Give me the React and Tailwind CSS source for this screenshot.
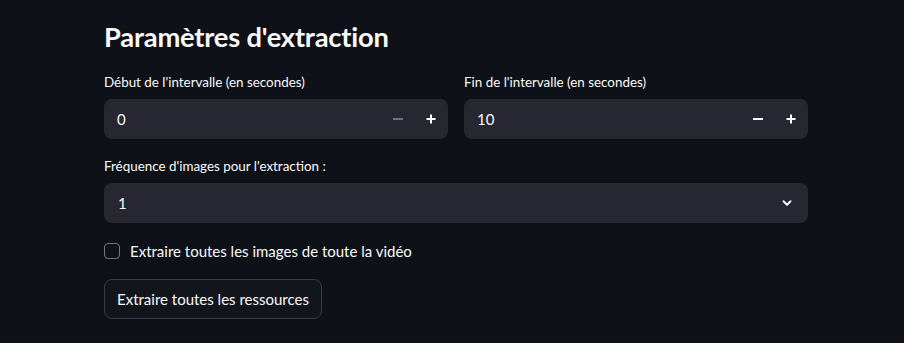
import React, { useState } from "react";

const font = { fontFamily: "Lato, 'Noto Sans', sans-serif" };

function NumberInput({ value, minDisabled }) {
  return (
    <div className="flex h-10 items-center rounded-lg bg-[#262730] pl-[13px] pr-[1px]">
      <span className="flex-1 text-[15px] text-[#fafafa]">{value}</span>
      <button className={`flex h-8 w-[33px] items-center justify-center ${minDisabled ? "text-[#6f707a]" : "text-white"}`}>
        <svg width="12" height="12" viewBox="0 0 12 12">
          <rect x="1" y="5" width="10" height="2" fill="currentColor" />
        </svg>
      </button>
      <button className="flex h-8 w-[33px] items-center justify-center text-white">
        <svg width="12" height="12" viewBox="0 0 12 12">
          <rect x="1.5" y="5" width="9" height="2" fill="currentColor" />
          <rect x="5" y="1.5" width="2" height="9" fill="currentColor" />
        </svg>
      </button>
    </div>
  );
}

export default function App() {
  const [checked, setChecked] = useState(false);
  return (
    <div className="min-h-[343px] w-full bg-[#0e1117] text-[#fafafa]" style={font}>
      <div className="ml-[104px] w-[704px] pt-[19px]">
        <h3 className="text-[27.3px] font-bold leading-[36px] tracking-[-0.2px]">Paramètres d'extraction</h3>
        <div className="mt-[18px] grid grid-cols-2 gap-4">
          <div>
            <label className="mb-[7px] block text-[13.4px] leading-[19px]">Début de l'intervalle (en secondes)</label>
            <NumberInput value="0" minDisabled />
          </div>
          <div>
            <label className="mb-[7px] block text-[13.4px] leading-[19px]">Fin de l'intervalle (en secondes)</label>
            <NumberInput value="10" />
          </div>
        </div>
        <div className="mt-[18px]">
          <label className="mb-[7px] block text-[13.4px] leading-[19px]">Fréquence d'images pour l'extraction :</label>
          <div className="flex h-10 items-center rounded-lg bg-[#262730] pl-[14px] pr-[14px]">
            <span className="flex-1 text-[15px]">1</span>
            <svg width="14" height="14" viewBox="0 0 24 24" fill="none" stroke="white" strokeWidth="3.2" strokeLinecap="round" strokeLinejoin="round">
              <path d="M6 9l6 6 6-6" />
            </svg>
          </div>
        </div>
        <label className="mt-[17px] flex items-center gap-[10px] cursor-pointer" onClick={() => setChecked(!checked)}>
          <span className="h-4 w-4 rounded-[4px] border border-[#74767f] bg-[#0e1117]" />
          <span className="text-[15px] leading-[22px]">Extraire toutes les images de toute la vidéo</span>
        </label>
        <button className="mt-[17px] h-10 rounded-lg border border-[#3a3c47] bg-[#13151c] px-3 text-[15px]">
          Extraire toutes les ressources
        </button>
      </div>
    </div>
  );
}
